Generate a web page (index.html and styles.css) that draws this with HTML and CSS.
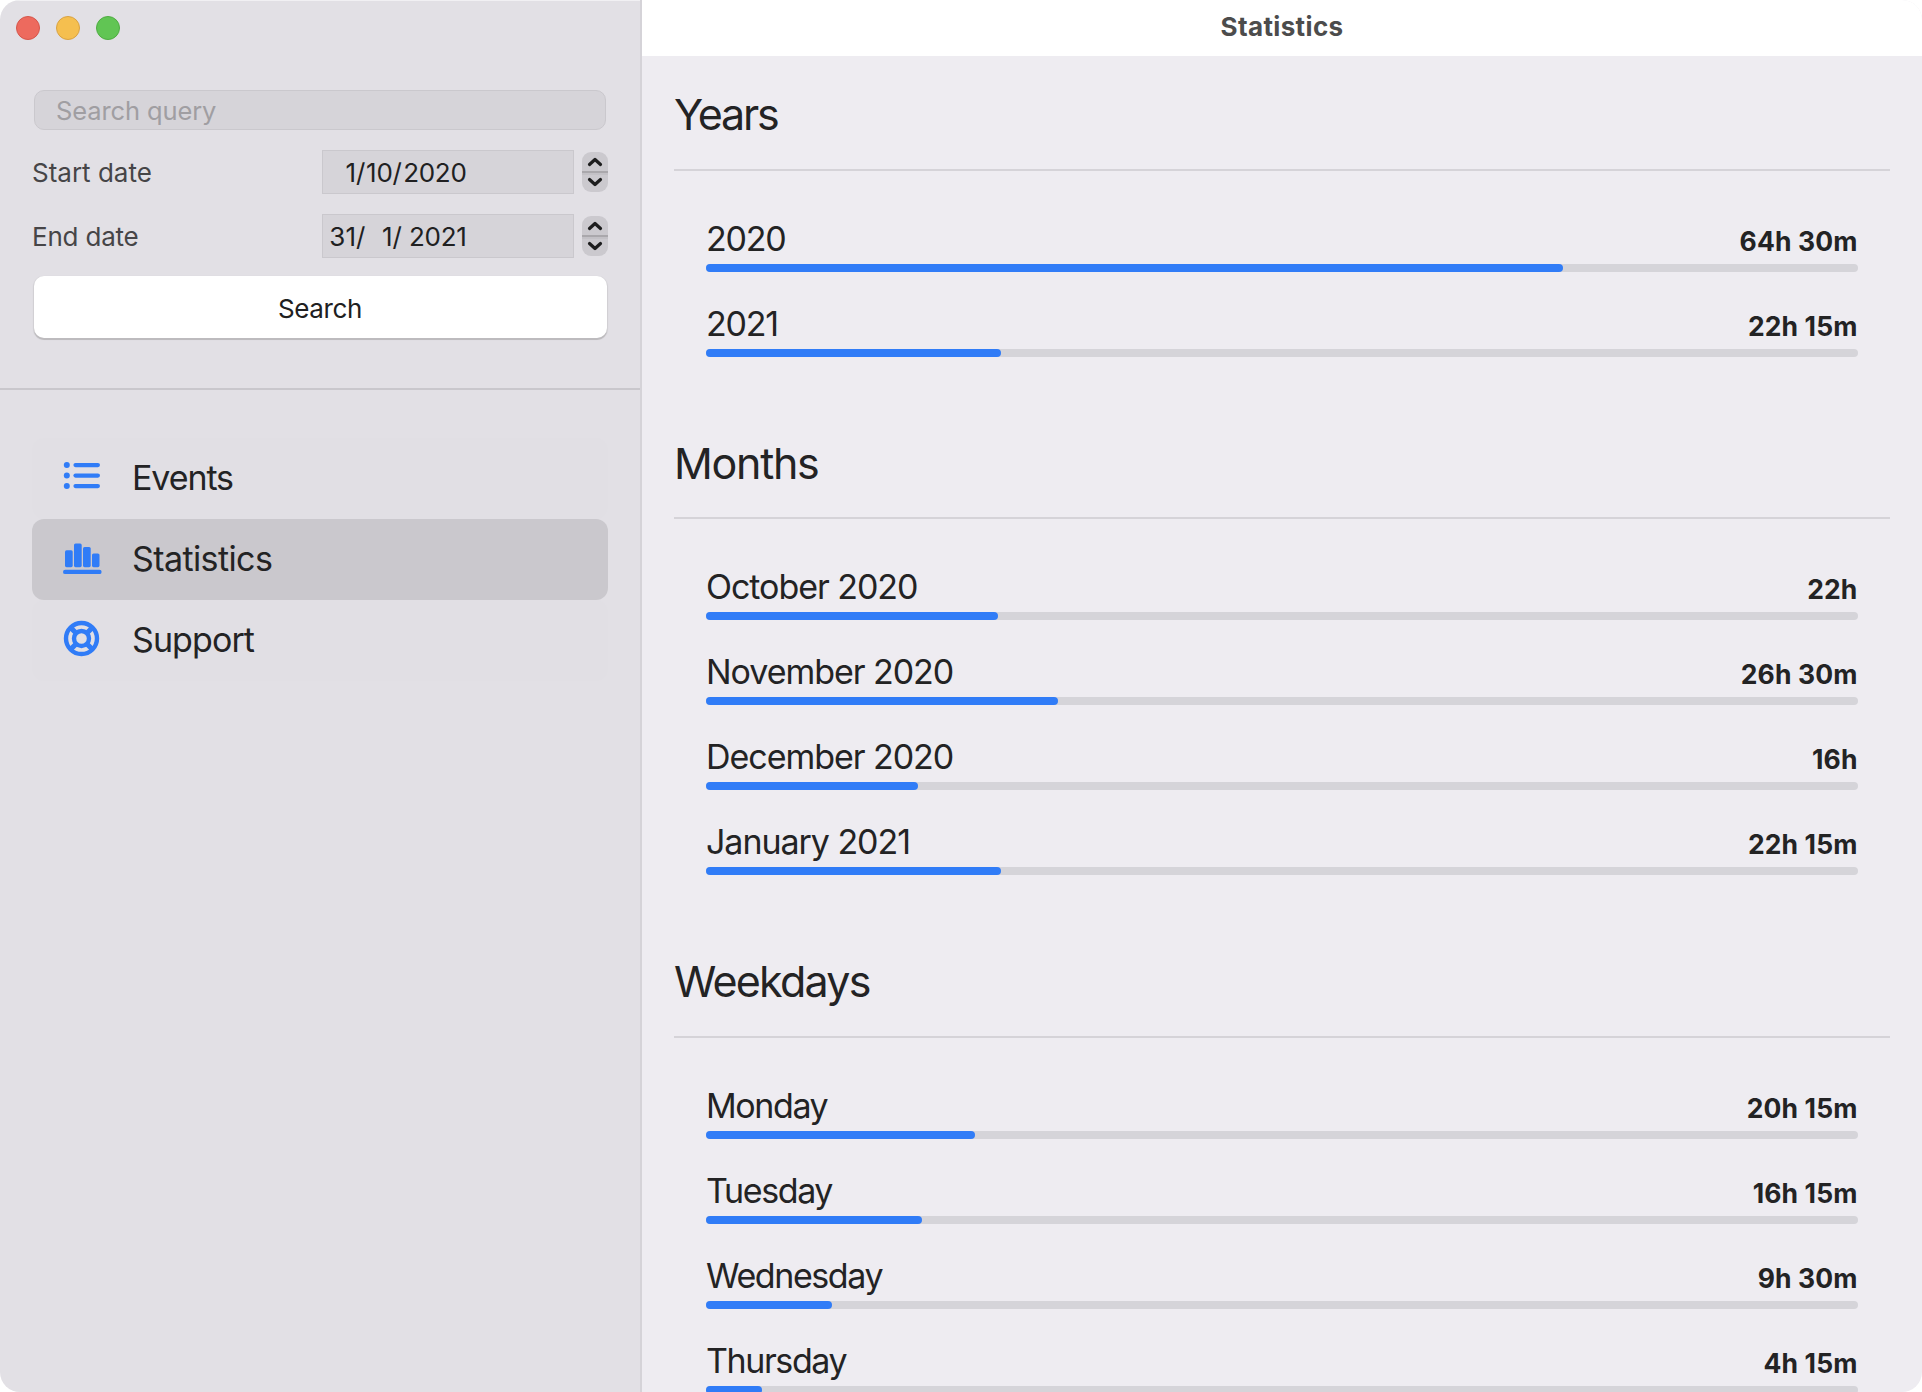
FILE: index.html
```html
<!DOCTYPE html>
<html lang="en">
<head>
<meta charset="utf-8">
<title>Statistics</title>
<link rel="stylesheet" href="styles.css">
</head>
<body>
<div class="window">
  <aside class="sidebar">
    <div class="traffic">
      <span class="light light-close"></span>
      <span class="light light-min"></span>
      <span class="light light-max"></span>
    </div>
    <form class="filters">
      <div class="query">Search query</div>
      <div class="date-row">
        <span class="date-label">Start date</span>
        <div class="date-field"><span>1</span><i>/</i><span>10</span><i>/</i><span>2020</span></div>
        <svg class="stepper" viewBox="0 0 26 40"><rect class="step-bg" width="26" height="40" rx="9"/><rect class="step-shade" y="21" width="26" height="2"/><rect class="step-line" y="19" width="26" height="2"/><path class="step-arrow" d="M7.5 12.5 13 7.5l5.5 5M7.5 27.5l5.5 5 5.5-5"/></svg>
      </div>
      <div class="date-row">
        <span class="date-label date-label-end">End date</span>
        <div class="date-field"><span>31</span><i>/</i><span>1</span><i>/</i><span>2021</span></div>
        <svg class="stepper" viewBox="0 0 26 40"><rect class="step-bg" width="26" height="40" rx="9"/><rect class="step-shade" y="21" width="26" height="2"/><rect class="step-line" y="19" width="26" height="2"/><path class="step-arrow" d="M7.5 12.5 13 7.5l5.5 5M7.5 27.5l5.5 5 5.5-5"/></svg>
      </div>
      <button class="search-button" type="button">Search</button>
    </form>
    <nav class="nav">
      <div class="nav-item">
        <svg class="nav-icon" viewBox="0 0 40 81">
          <circle cx="4.8" cy="27.1" r="3"/><circle cx="4.8" cy="37.6" r="3"/><circle cx="4.8" cy="48.1" r="3"/>
          <rect x="11.4" y="25" width="26.6" height="4.2" rx="2.1"/><rect x="11.4" y="35.5" width="26.6" height="4.2" rx="2.1"/><rect x="11.4" y="46" width="26.6" height="4.2" rx="2.1"/>
        </svg>
        <span class="nav-label nav-events">Events</span>
      </div>
      <div class="nav-item nav-selected">
        <svg class="nav-icon" viewBox="0 0 40 81">
          <rect x="3" y="31.2" width="7.7" height="17" rx="1.6"/><rect x="12" y="24.4" width="7.7" height="23.8" rx="1.6"/><rect x="21" y="28" width="7.7" height="20.2" rx="1.6"/><rect x="30" y="34.4" width="7.5" height="13.8" rx="1.6"/>
          <rect x="1" y="50.7" width="38.6" height="4.4" rx="2.2"/>
        </svg>
        <span class="nav-label nav-statistics">Statistics</span>
      </div>
      <div class="nav-item">
        <svg class="nav-icon" viewBox="0 0 40 81">
          <g class="ring"><circle cx="19.5" cy="38.5" r="15.5"/><circle cx="19.5" cy="38.5" r="7.5"/></g>
          <path class="spokes" d="M8.5 27.5l6 6M30.5 27.5l-6 6M8.5 49.5l6-6M30.5 49.5l-6-6"/>
        </svg>
        <span class="nav-label nav-support">Support</span>
      </div>
    </nav>
  </aside>
  <div class="content">
    <header class="titlebar">Statistics</header>
    <main class="report">
      <section class="group years">
        <h2>Years</h2>
        <div class="rows">
          <div class="row"><div class="row-head"><span>2020</span><b>64h 30m</b></div><div class="track"><div class="fill" style="width:74.39%"></div></div></div>
          <div class="row"><div class="row-head"><span>2021</span><b>22h 15m</b></div><div class="track"><div class="fill" style="width:25.61%"></div></div></div>
        </div>
      </section>
      <section class="group months">
        <h2>Months</h2>
        <div class="rows">
          <div class="row"><div class="row-head"><span>October 2020</span><b>22h</b></div><div class="track"><div class="fill" style="width:25.36%"></div></div></div>
          <div class="row"><div class="row-head"><span>November 2020</span><b>26h 30m</b></div><div class="track"><div class="fill" style="width:30.55%"></div></div></div>
          <div class="row"><div class="row-head"><span>December 2020</span><b>16h</b></div><div class="track"><div class="fill" style="width:18.44%"></div></div></div>
          <div class="row"><div class="row-head"><span>January 2021</span><b>22h 15m</b></div><div class="track"><div class="fill" style="width:25.61%"></div></div></div>
        </div>
      </section>
      <section class="group weekdays">
        <h2>Weekdays</h2>
        <div class="rows">
          <div class="row"><div class="row-head"><span>Monday</span><b>20h 15m</b></div><div class="track"><div class="fill" style="width:23.34%"></div></div></div>
          <div class="row"><div class="row-head"><span>Tuesday</span><b>16h 15m</b></div><div class="track"><div class="fill" style="width:18.73%"></div></div></div>
          <div class="row"><div class="row-head"><span>Wednesday</span><b>9h 30m</b></div><div class="track"><div class="fill" style="width:10.95%"></div></div></div>
          <div class="row"><div class="row-head"><span>Thursday</span><b>4h 15m</b></div><div class="track"><div class="fill" style="width:4.9%"></div></div></div>
        </div>
      </section>
    </main>
  </div>
</div>
</body>
</html>
```
FILE: styles.css
```css
* { box-sizing: border-box; }

body {
  margin: 0;
  background: #fff;
  color: #232324;
  font-family: Inter, "Liberation Sans", sans-serif;
  font-size: 26px;
  font-weight: 430;
  overflow: hidden;
}

.window {
  display: flex;
  width: 1922px;
  height: 1392px;
  border-radius: 20px;
  overflow: hidden;
}

/* Sidebar */
.sidebar {
  width: 642px;
  flex: none;
  background: #e2e0e5;
  border-right: 2px solid #d5d3d8;
  box-shadow: inset 0 1px 0 #f1f0f3;
}

.traffic {
  display: flex;
  gap: 16px;
  height: 90px;
  padding: 16px 16px 0;
}

.light {
  width: 24px;
  height: 24px;
  border-radius: 50%;
  border: 1px solid;
}

.light-close { background: #ed6a5e; border-color: #d5564b; }
.light-min { background: #f5bf4f; border-color: #d8a243; }
.light-max { background: #61c554; border-color: #4fac42; }

.filters {
  height: 300px;
  padding: 0 32px;
  border-bottom: 2px solid #c9c7cc;
}

.query {
  height: 40px;
  margin: 0 2px 20px;
  padding-left: 21px;
  border: 1px solid #cac8cd;
  border-radius: 10px;
  background: #d6d4d9;
  color: #a09ea2;
  font-size: 25.5px;
  line-height: 40px;
  letter-spacing: -0.12px;
}

.date-row {
  display: flex;
  align-items: center;
  height: 44px;
  margin-bottom: 20px;
}

.date-label { flex: 1; color: #464547; }
.date-label-end { letter-spacing: -0.2px; }

.date-field {
  display: grid;
  grid-template-columns: 27px 10px 26.5px 10px 64px;
  align-items: center;
  width: 252px;
  height: 44px;
  padding-left: 6px;
  border: 1px solid #cac8cd;
  background: #d6d4d9;
  color: #202021;
  text-align: right;
}

.date-field i { font-style: normal; text-align: left; }
.date-field span:last-child { letter-spacing: -0.3px; }

.stepper { width: 26px; height: 40px; margin-left: 8px; }
.step-bg { fill: #cbc9ce; }
.step-line { fill: #aaa8ac; }
.step-shade { fill: #c3c1c6; }
.step-arrow {
  fill: none;
  stroke: #1d1d1e;
  stroke-width: 3.2;
  stroke-linecap: round;
  stroke-linejoin: round;
}

.search-button {
  display: block;
  width: 573px;
  height: 62px;
  margin: -2px 0 0 1.5px;
  padding: 4px 0 0;
  border: 0;
  border-radius: 10px;
  background: #fff;
  box-shadow: 0 2px 0 #bdbbbe, 0 1px 1px 1px rgba(0, 0, 0, 0.08);
  color: #202021;
  font: inherit;
  line-height: 58px;
  letter-spacing: -0.4px;
}

.nav {
  display: flex;
  flex-direction: column;
  padding: 48px 32px 0;
}

.nav-item {
  display: flex;
  align-items: center;
  gap: 30px;
  height: 81px;
  padding-left: 30px;
  border-radius: 12px;
  background: #e1dfe4;
  font-size: 34px;
}

.nav-selected { background: #cac8cd; }
.nav-label { padding-bottom: 2px; }
.nav-events { letter-spacing: -1.1px; }
.nav-statistics { letter-spacing: -0.6px; }
.nav-support { letter-spacing: -0.9px; }

.nav-icon { width: 40px; height: 81px; fill: #307cf7; }
.ring { fill: none; stroke: #307cf7; stroke-width: 4.4; }
.spokes { fill: none; stroke: #307cf7; stroke-width: 5.2; }

/* Content */
.content {
  flex: 1;
  background: #eeecf1;
}

.titlebar {
  height: 56px;
  background: #fff;
  color: #4c4c4c;
  font-weight: 700;
  line-height: 53px;
  letter-spacing: 0.36px;
  text-align: center;
}

.report { padding: 0 32px; }

.group { padding-top: 80px; }
.years { padding-top: 32px; }

h2 {
  margin: 0 0 29px;
  font-size: 43px;
  font-weight: 430;
  line-height: 52px;
  letter-spacing: -1.75px;
}

.years h2 { letter-spacing: -2.2px; }
.months h2 { margin-bottom: 28px; letter-spacing: -1.3px; }

.rows {
  padding: 16px 32px 0;
  border-top: 2px solid #d5d3d8;
}

.row {
  display: flex;
  flex-direction: column;
  justify-content: flex-end;
  height: 85px;
}

.row-head {
  display: flex;
  justify-content: space-between;
  align-items: baseline;
  height: 40px;
  margin-bottom: 5px;
  padding-right: 0.5px;
  line-height: 40px;
}

.row-head span { font-size: 34px; }
.row-head b { font-size: 26.5px; font-weight: 700; letter-spacing: 0.12px; }
.years .row-head span { letter-spacing: -1.2px; }
.months .row-head span { letter-spacing: -1.05px; }
.weekdays .row-head span { letter-spacing: -1.4px; }

.track {
  height: 8px;
  border-radius: 4px;
  background: #d5d4d9;
}

.fill {
  height: 8px;
  border-radius: 4px;
  background: #307cf7;
}
```
